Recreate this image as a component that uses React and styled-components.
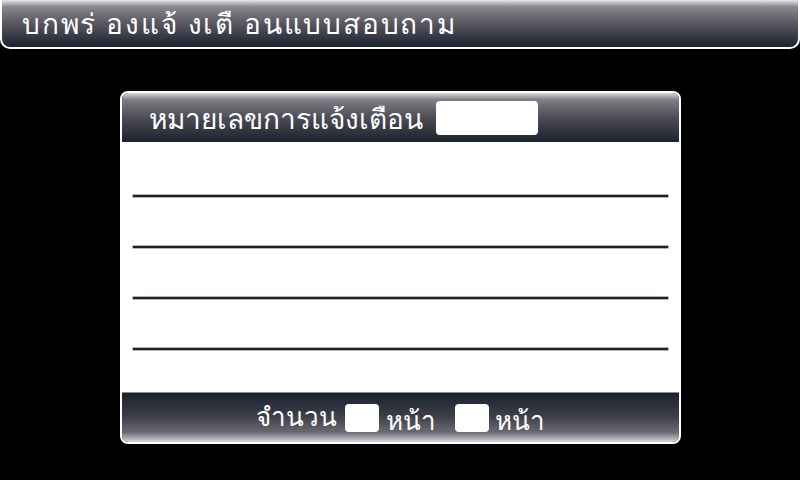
import React from "react";
import styled, { createGlobalStyle } from "styled-components";

const GlobalStyle = createGlobalStyle`
  html, body {
    margin: 0;
    padding: 0;
    background: #000;
  }
  body {
    font-family: "Noto Sans", "DejaVu Sans", sans-serif;
    color: #fff;
  }
`;

const Screen = styled.div`
  width: 800px;
  height: 480px;
  background: #000;
  display: flex;
  flex-direction: column;
  align-items: center;
  overflow: hidden;
`;

const TitleBar = styled.div`
  box-sizing: border-box;
  width: 800px;
  height: 49px;
  border: 2px solid #fff;
  border-top: none;
  border-radius: 0 0 10px 10px;
  background: linear-gradient(#e6e6e8 0%, #8a888e 14%, #5e5c64 45%, #1a2230 100%);
  display: flex;
  align-items: center;
  padding-left: 20px;
`;

const Title = styled.h1`
  margin: 0;
  font-size: 28px;
  font-weight: 400;
  letter-spacing: 1.8px;
  color: #fff;
  white-space: pre;
`;

const Panel = styled.div`
  box-sizing: border-box;
  margin-top: 42px;
  width: 561px;
  border: 2px solid #fff;
  border-radius: 8px;
  overflow: hidden;
  display: flex;
  flex-direction: column;
`;

const Band = styled.div`
  height: 49px;
  display: flex;
  align-items: center;
  background: ${(p) =>
    p.$flip
      ? "linear-gradient(#1a2230 0%, #3c3c46 45%, #6a6870 80%, #d6d6d8 100%)"
      : "linear-gradient(#d8d8da 0%, #7e7c84 14%, #4e4d56 50%, #1a2230 100%)"};
  justify-content: ${(p) => (p.$flip ? "center" : "flex-start")};
  padding-left: ${(p) => (p.$flip ? "0" : "27px")};
  border-top: ${(p) => (p.$flip ? "1px solid #8c8c90" : "none")};
`;

const Label = styled.span`
  font-size: ${(p) => p.$size || 26}px;
  color: #fff;
  line-height: 1;
  position: relative;
  top: ${(p) => p.$drop || 0}px;
`;

const Field = styled.div`
  background: #fff;
  border-radius: 4px;
  width: ${(p) => p.$w}px;
  height: ${(p) => p.$h}px;
  margin: ${(p) => p.$m || "0"};
  flex-shrink: 0;
`;

const Sheet = styled.div`
  height: 250px;
  background: #fff;
  box-sizing: border-box;
  padding: 53px 11px 0 11px;
  display: flex;
  flex-direction: column;
  gap: 49px;
`;

const Rule = styled.div`
  height: 2px;
  background: #231f20;
  box-shadow: 0 0 0 0.5px #6b6b6b;
`;

const FooterRow = styled.div`
  display: flex;
  align-items: center;
  height: 100%;
`;

export default function App() {
  return (
    <Screen>
      <GlobalStyle />
      <TitleBar>
        <Title>บกพร่ องแจ้ งเตื อนแบบสอบถาม</Title>
      </TitleBar>
      <Panel>
        <Band>
          <Label $size={28}>หมายเลขการแจ้งเตือน</Label>
          <Field $w={102} $h={34} $m="0 0 0 13px" />
        </Band>
        <Sheet>
          {[0, 1, 2, 3].map((i) => (
            <Rule key={i} />
          ))}
        </Sheet>
        <Band $flip>
          <FooterRow>
            <Label $drop={-2}>จำนวน</Label>
            <Field $w={34} $h={28} $m="0 7px 0 8px" />
            <Label $drop={2}>หน้า</Label>
            <Field $w={34} $h={28} $m="0 6px 0 19px" />
            <Label $drop={2}>หน้า</Label>
          </FooterRow>
        </Band>
      </Panel>
    </Screen>
  );
}
